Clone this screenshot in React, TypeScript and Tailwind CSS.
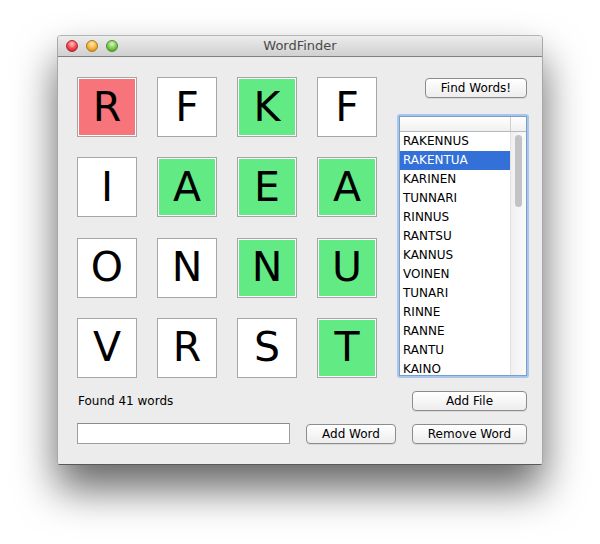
import React from "react";

const letters = [
  { ch: "R", tone: "red" },
  { ch: "F", tone: "white" },
  { ch: "K", tone: "green" },
  { ch: "F", tone: "white" },
  { ch: "I", tone: "white" },
  { ch: "A", tone: "green" },
  { ch: "E", tone: "green" },
  { ch: "A", tone: "green" },
  { ch: "O", tone: "white" },
  { ch: "N", tone: "white" },
  { ch: "N", tone: "green" },
  { ch: "U", tone: "green" },
  { ch: "V", tone: "white" },
  { ch: "R", tone: "white" },
  { ch: "S", tone: "white" },
  { ch: "T", tone: "green" },
];

const words = [
  "RAKENNUS",
  "RAKENTUA",
  "KARINEN",
  "TUNNARI",
  "RINNUS",
  "RANTSU",
  "KANNUS",
  "VOINEN",
  "TUNARI",
  "RINNE",
  "RANNE",
  "RANTU",
  "KAINO",
];

const font = { fontFamily: '"DejaVu Sans", "Lucida Grande", Verdana, sans-serif' };

function AquaButton({ label, className }: { label: string; className: string }) {
  return (
    <button
      type="button"
      className={
        "flex h-[20px] items-center justify-center rounded-[4px] border border-[#8c8c8c] bg-gradient-to-b from-white to-[#ededed] text-[12px] leading-none text-black shadow-[0_1px_0_rgba(0,0,0,0.08)] " +
        className
      }
    >
      {label}
    </button>
  );
}

function Light({ color }: { color: string }) {
  return <span className={"block h-[12px] w-[12px] rounded-full border " + color} />;
}

export default function App() {
  const selected = 1;

  return (
    <div className="min-h-[544px] bg-white pl-[57px] pt-[35px]" style={font}>
      <div className="w-[486px] overflow-hidden rounded-t-[4px] rounded-b-[3px] border border-b-[#595959] border-l-[#a8a8a8] border-r-[#a8a8a8] border-t-[#b5b5b5] shadow-[0_24px_42px_rgba(0,0,0,0.6)]">
        {/* title bar */}
        <div className="relative flex h-[21px] items-center border-b border-[#808080] bg-gradient-to-b from-[#ececec] to-[#d0d0d0] pl-[8px]">
          <div className="flex gap-[8px]">
            <Light color="border-[#b3272c] bg-[radial-gradient(circle_at_50%_30%,#ffc6c4,#f0434a_55%,#b7171f)]" />
            <Light color="border-[#b0771e] bg-[radial-gradient(circle_at_50%_30%,#ffeab0,#f4b238_55%,#c27a10)]" />
            <Light color="border-[#4a8d2c] bg-[radial-gradient(circle_at_50%_30%,#d8f7bd,#78c84a_55%,#3e8d1c)]" />
          </div>
          <div className="absolute inset-0 flex items-center justify-center text-[13px] text-[#4a4a4a]">
            WordFinder
          </div>
        </div>

        {/* body */}
        <div className="h-[407px] bg-[#ececec] pl-[19px] pt-[20px]">
          <div className="flex">
            <div className="grid grid-cols-[repeat(4,60px)] gap-[20px]">
              {letters.map((l, i) => (
                <div
                  key={i}
                  className="h-[60px] w-[60px] border border-[#a6a6a6] bg-white p-[1px]"
                >
                  <div
                    className={
                      "flex h-full w-full items-center justify-center text-[41px] leading-none text-black " +
                      (l.tone === "red"
                        ? "bg-[#f6747a]"
                        : l.tone === "green"
                        ? "bg-[#62ea84]"
                        : "bg-white")
                    }
                  >
                    {l.ch}
                  </div>
                </div>
              ))}
            </div>

            <div className="ml-[20px] w-[132px]">
              <AquaButton label="Find Words!" className="ml-[28px] mt-[1px] w-[102px]" />
              <div className="mt-[16px] h-[264px] rounded-[3px] bg-[#a6c6ee] p-[2px]">
                <div className="flex h-full flex-col overflow-hidden border border-[#7d9cc6] bg-white">
                  <div className="flex h-[15px] shrink-0 border-b border-[#b9b9b9] bg-gradient-to-b from-white to-[#f0f0f0]">
                    <div className="flex-1" />
                    <div className="w-[16px] border-l border-[#cfcfcf]" />
                  </div>
                  <div className="flex min-h-0 flex-1">
                    <div className="flex-1 overflow-hidden">
                      {words.map((w, i) => (
                        <div
                          key={w}
                          className={
                            "h-[19px] pl-[3px] text-[12px] leading-[19px] " +
                            (i === selected ? "bg-[#3370d8] text-white" : "text-black")
                          }
                        >
                          {w}
                        </div>
                      ))}
                    </div>
                    <div className="w-[16px] border-l border-[#e2e2e2] bg-gradient-to-r from-[#f0f0f0] to-[#fafafa] pt-[3px]">
                      <div className="mx-auto h-[72px] w-[7px] rounded-full bg-[#c3c3c3]" />
                    </div>
                  </div>
                </div>
              </div>
            </div>
          </div>

          <div className="mt-[13px] flex items-center">
            <div className="w-[335px] pl-[1px] text-[12px] text-black">Found 41 words</div>
            <AquaButton label="Add File" className="w-[115px]" />
          </div>

          <div className="mt-[12px] flex items-center">
            <input
              type="text"
              className="h-[21px] w-[213px] border border-[#9e9e9e] border-t-[#8a8a8a] bg-white text-[12px] outline-none"
            />
            <AquaButton label="Add Word" className="ml-[16px] w-[90px]" />
            <AquaButton label="Remove Word" className="ml-[16px] w-[115px]" />
          </div>
        </div>
      </div>
    </div>
  );
}
